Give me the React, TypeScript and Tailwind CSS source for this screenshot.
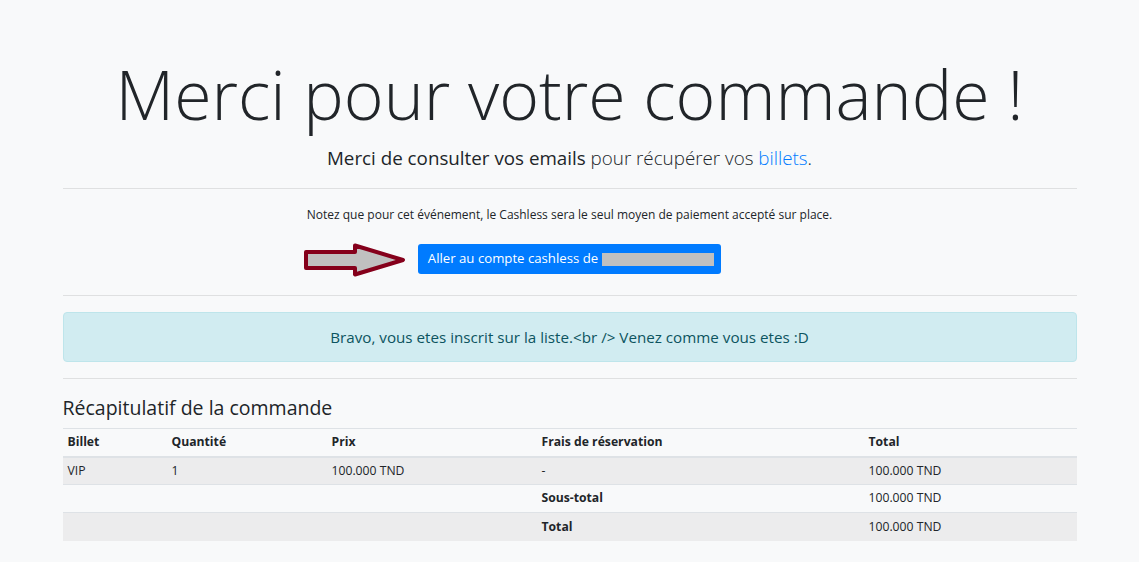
import React from 'react'

const rows = [
  { billet: 'VIP', qty: '1', prix: '100.000 TND', frais: '-', total: '100.000 TND', bold: false },
  { billet: '', qty: '', prix: '', frais: 'Sous-total', total: '100.000 TND', bold: true },
  { billet: '', qty: '', prix: '', frais: 'Total', total: '100.000 TND', bold: true },
]

function Arrow() {
  return (
    <svg width="108" height="36" viewBox="0 0 108 36" className="absolute right-full top-[-2px] mr-[8px]">
      <polygon
        points="4,10 53,10 53,3.5 101,18 53,32.5 53,26 4,26"
        fill="#c0c0c0"
        stroke="#85001b"
        strokeWidth="4"
        strokeLinejoin="round"
      />
    </svg>
  )
}

export default function App() {
  return (
    <div className="min-h-screen bg-[#f8f9fa] text-[#212529] font-['Open_Sans','Liberation_Sans',sans-serif]">
      <div className="w-[1014px] mx-auto pb-6">
        <div className="text-center pt-[51px]">
          <h1 className="text-[68px] leading-[85px] font-light">Merci pour votre commande !</h1>
          <p className="mt-[7px] text-[18.8px] leading-[30px] font-light">
            <span className="font-normal">Merci de consulter vos emails</span> pour récupérer vos{' '}
            <a className="text-[#007bff]">billets</a>.
          </p>
        </div>

        <hr className="mt-[15px] border-t border-[#dfe0e1]" />

        <div className="text-center">
          <p className="mt-[16px] text-[12px] leading-[20px]">
            Notez que pour cet événement, le Cashless sera le seul moyen de paiement accepté sur place.
          </p>
          <div className="mt-[19px] flex justify-center">
            <div className="relative">
              <Arrow />
              <button className="flex items-center h-[30px] pl-[10px] pr-[7px] rounded-[3px] bg-[#007bff] text-white text-[13.2px]">
                Aller au compte cashless de
                <span className="ml-[4px] inline-block w-[112px] h-[13px] bg-[#c0c0c0]" />
              </button>
            </div>
          </div>
        </div>

        <hr className="mt-[21px] border-t border-[#dfe0e1]" />

        <div className="mt-[16px] h-[50px] flex items-center justify-center rounded-[4px] border border-[#bee5eb] bg-[#d1ecf1] text-[#0c5460] text-[15.2px]">
          Bravo, vous etes inscrit sur la liste.&lt;br /&gt; Venez comme vous etes :D
        </div>

        <hr className="mt-[16px] border-t border-[#dfe0e1]" />

        <h5 className="mt-[17px] text-[19.5px] leading-[24px] font-medium">Récapitulatif de la commande</h5>

        <table className="mt-[8px] w-full border-collapse text-[12.2px] text-left">
          <thead>
            <tr className="font-bold">
              <th className="w-[104px] h-[28px] px-[5px] border-t border-b-2 border-[#dee2e6]">Billet</th>
              <th className="w-[160px] h-[28px] px-[5px] border-t border-b-2 border-[#dee2e6]">Quantité</th>
              <th className="w-[210px] h-[28px] px-[5px] border-t border-b-2 border-[#dee2e6]">Prix</th>
              <th className="w-[327px] h-[28px] px-[5px] border-t border-b-2 border-[#dee2e6]">Frais de réservation</th>
              <th className="h-[28px] px-[5px] border-t border-b-2 border-[#dee2e6]">Total</th>
            </tr>
          </thead>
          <tbody>
            {rows.map((r, i) => (
              <tr key={i} className={i % 2 === 0 ? 'bg-[#ececed]' : ''}>
                <td className="h-[28px] px-[5px] border-t border-[#dee2e6]">{r.billet}</td>
                <td className="h-[28px] px-[5px] border-t border-[#dee2e6]">{r.qty}</td>
                <td className="h-[28px] px-[5px] border-t border-[#dee2e6]">{r.prix}</td>
                <td className={`h-[28px] px-[5px] border-t border-[#dee2e6] ${r.bold ? 'font-bold' : ''}`}>{r.frais}</td>
                <td className="h-[28px] px-[5px] border-t border-[#dee2e6]">{r.total}</td>
              </tr>
            ))}
          </tbody>
        </table>
      </div>
    </div>
  )
}
